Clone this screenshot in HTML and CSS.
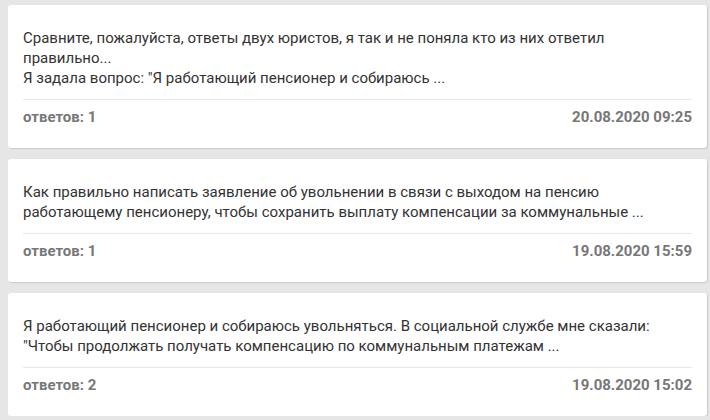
FILE: index.html
```html
<!DOCTYPE html>
<html lang="ru">
<head>
<meta charset="utf-8">
<link rel="stylesheet" href="styles.css">
</head>
<body>
<div class="list">
  <div class="card">
    <div class="text">Сравните, пожалуйста, ответы двух юристов, я так и не поняла кто из них ответил<br>правильно...<br>Я задала вопрос: "Я работающий пенсионер и собираюсь ...</div>
    <div class="footer"><span>ответов: 1</span><span>20.08.2020 09:25</span></div>
  </div>
  <div class="card">
    <div class="text">Как правильно написать заявление об увольнении в связи с выходом на пенсию работающему пенсионеру, чтобы сохранить выплату компенсации за коммунальные ...</div>
    <div class="footer"><span>ответов: 1</span><span>19.08.2020 15:59</span></div>
  </div>
  <div class="card">
    <div class="text">Я работающий пенсионер и собираюсь увольняться. В социальной службе мне сказали: "Чтобы продолжать получать компенсацию по коммунальным платежам ...</div>
    <div class="footer"><span>ответов: 2</span><span>19.08.2020 15:02</span></div>
  </div>
</div>
</body>
</html>
```
FILE: styles.css
```css
html, body {
  margin: 0;
  padding: 0;
  background: #e6e6e6;
  font-family: Roboto, "Noto Sans", sans-serif;
}
.list {
  padding: 5px 0 0 8px;
  display: flex;
  flex-direction: column;
  gap: 11px;
  width: 699px;
}
.card {
  background: #fff;
  border-radius: 3px;
  box-shadow: 1px 1px 1px rgba(0,0,0,0.12);
  padding: 23px 15px 21px;
}
.text {
  font-size: 15px;
  line-height: 20px;
  color: #333;
  padding-bottom: 11px;
  border-bottom: 1px solid #e8e8e8;
}
.footer {
  margin-top: 7px;
  display: flex;
  justify-content: space-between;
  font-size: 15px;
  line-height: 20px;
  font-weight: bold;
  color: #777;
}
```
